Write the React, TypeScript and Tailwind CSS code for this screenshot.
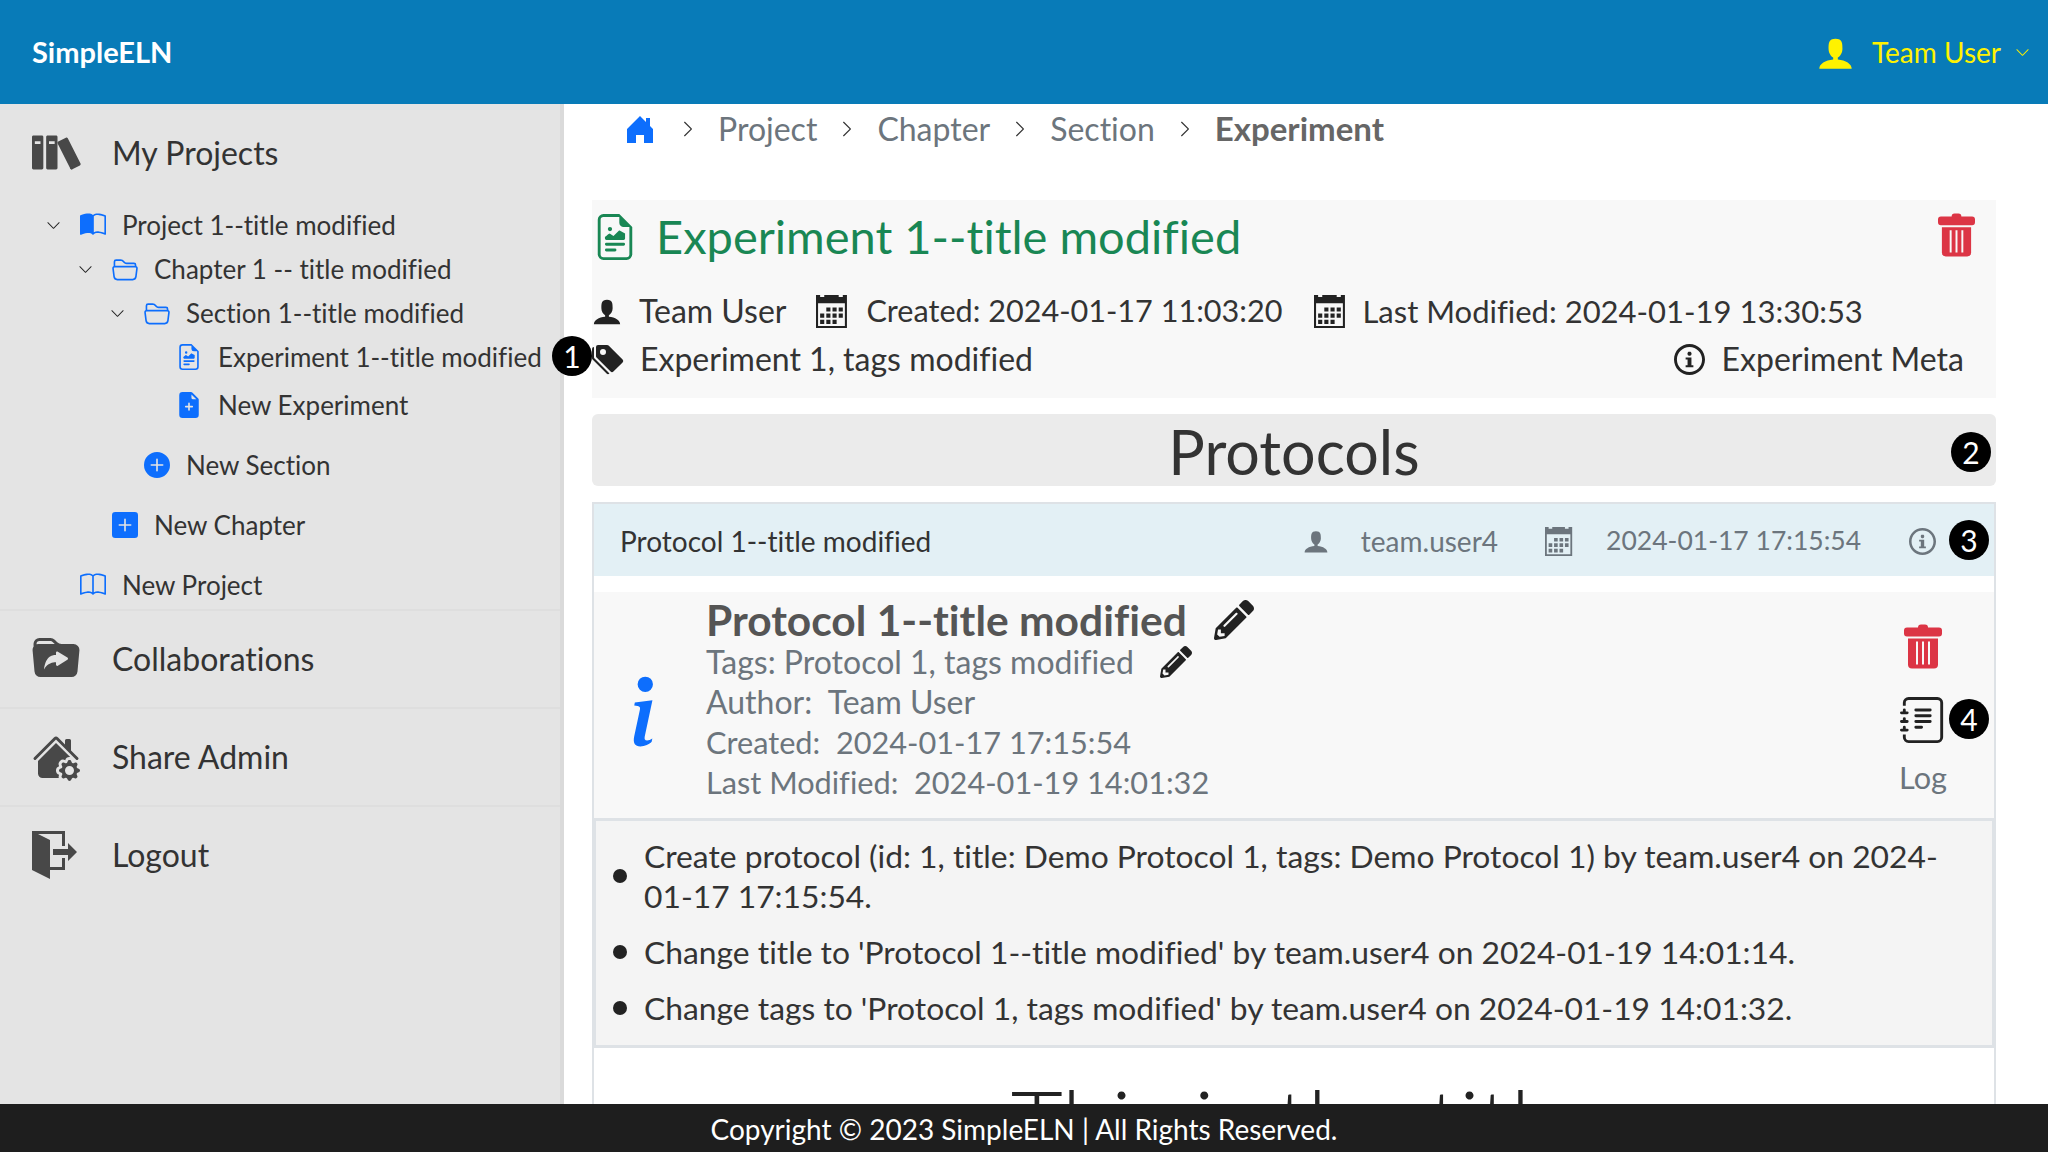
import type { ReactNode } from "react";
import {
	BsBook,
	BsBookHalf,
	BsChevronDown,
	BsChevronRight,
	BsFileEarmarkPlusFill,
	BsFileEarmarkRichtext,
	BsFolder2Open,
	BsFolderSymlinkFill,
	BsHouseGearFill,
	BsInfoLg,
	BsJournalText,
	BsPlusCircleFill,
	BsPlusSquareFill,
	BsTagsFill,
} from "react-icons/bs";
import { FaPencilAlt } from "react-icons/fa";
import { ImBooks, ImCalendar, ImExit, ImInfo, ImUser } from "react-icons/im";

function Trash({ className }: { className: string }) {
	return (
		<svg viewBox="0 0 38 44" className={className} fill="currentColor">
			<path d="M14 3a3 3 0 0 1 3-3h4a3 3 0 0 1 3 3h11a3 3 0 0 1 3 3v3a3 3 0 0 1-3 3H3a3 3 0 0 1-3-3V6a3 3 0 0 1 3-3z" />
			<path d="M4 14h30v26a4 4 0 0 1-4 4H8a4 4 0 0 1-4-4z" />
			<path d="M12 17h2v23h-2zM18 17h2v23h-2zM24 17h2v23h-2z" fill="#f8f8f8" />
		</svg>
	);
}

function HomeIcon({ className }: { className: string }) {
	return (
		<svg viewBox="0 0 26 27" className={className} fill="currentColor">
			<path d="M13 0l6 6V2h4v8l3 3v14h-9V19H9v8H0V13z" />
		</svg>
	);
}

function Badge({ n, className }: { n: number; className: string }) {
	return (
		<span
			className={`absolute z-10 flex size-[40px] items-center justify-center rounded-full bg-black text-[30px] leading-none text-white ${className}`}
		>
			{n}
		</span>
	);
}

const tree: { label: string; icon: ReactNode; chevron?: boolean; cls: string }[] = [
	{ label: "Project 1--title modified", icon: <BsBookHalf className="size-[26px] text-[#0d6efd]" />, chevron: true, cls: "pl-[46px]" },
	{ label: "Chapter 1 -- title modified", icon: <BsFolder2Open className="size-[26px] text-[#0d6efd]" />, chevron: true, cls: "pl-[78px]" },
	{ label: "Section 1--title modified", icon: <BsFolder2Open className="size-[26px] text-[#0d6efd]" />, chevron: true, cls: "pl-[110px]" },
	{ label: "Experiment 1--title modified", icon: <BsFileEarmarkRichtext className="size-[26px] text-[#0d6efd]" />, cls: "pl-[142px]" },
	{ label: "New Experiment", icon: <BsFileEarmarkPlusFill className="size-[26px] text-[#0d6efd]" />, cls: "pl-[142px] mt-[4px]" },
	{ label: "New Section", icon: <BsPlusCircleFill className="size-[26px] text-[#0d6efd]" />, cls: "pl-[110px] mt-[16px]" },
	{ label: "New Chapter", icon: <BsPlusSquareFill className="size-[26px] text-[#0d6efd]" />, cls: "pl-[78px] mt-[16px]" },
	{ label: "New Project", icon: <BsBook className="size-[26px] text-[#0d6efd]" />, cls: "pl-[46px] mt-[16px]" },
];

const logs = [
	"Create protocol (id: 1, title: Demo Protocol 1, tags: Demo Protocol 1) by team.user4 on 2024-01-17 17:15:54.",
	"Change title to 'Protocol 1--title modified' by team.user4 on 2024-01-19 14:01:14.",
	"Change tags to 'Protocol 1, tags modified' by team.user4 on 2024-01-19 14:01:32.",
];

function Sidebar() {
	return (
		<aside className="h-full w-[564px] shrink-0 border-r-[4px] border-[#dadada] bg-[#e4e4e4] text-[#333]">
			<div className="flex h-[99px] items-center gap-[29px] pb-[2px] pl-[32px] text-[32px]">
				<ImBooks className="size-[51px] text-[#484848]" />
				My Projects
			</div>
			<ul className="mb-[2px] text-[26px]">
				{tree.map((t) => (
					<li key={t.label} className={`flex h-[44px] items-center ${t.cls}`}>
						{t.chevron && <BsChevronDown className="mr-[19px] size-[15px] text-[#222]" />}
						{!t.chevron && <span className="w-[34px]" />}
						<span className="mr-[16px] flex w-[26px] justify-center">{t.icon}</span>
						{t.label}
					</li>
				))}
			</ul>
			{[
				{ label: "Collaborations", icon: <BsFolderSymlinkFill className="size-[48px] text-[#484848]" /> },
				{ label: "Share Admin", icon: <BsHouseGearFill className="size-[48px] text-[#484848]" /> },
				{ label: "Logout", icon: <ImExit className="size-[48px] text-[#484848]" /> },
			].map((s) => (
				<div key={s.label} className="flex h-[98px] items-center gap-[32px] border-t-2 border-[#dedede] pl-[32px] text-[32px]">
					{s.icon}
					{s.label}
				</div>
			))}
		</aside>
	);
}

function Breadcrumb() {
	const sep = <BsChevronRight className="size-[18px] text-[#333]" />;
	return (
		<nav className="mb-[46px] flex h-[50px] items-center gap-[21px] pl-[35px] text-[32px] text-[#6c757d]">
			<HomeIcon className="mr-[5px] h-[27px] w-[26px] text-[#0d6efd]" />
			{sep}
			<span>Project</span>
			{sep}
			<span>Chapter</span>
			{sep}
			<span>Section</span>
			{sep}
			<span className="text-[33px] font-bold text-[#666]">Experiment</span>
		</nav>
	);
}

function ExperimentCard() {
	return (
		<section className="relative h-[198px] bg-[#f8f8f8] text-[31px] text-[#333]">
			<div className="flex h-[74px] items-center gap-[18px] pb-[1px] text-[#198754]">
				<BsFileEarmarkRichtext className="size-[46px]" />
				<h1 className="text-[47px]">Experiment 1--title modified</h1>
			</div>
			<Trash className="absolute right-[21px] top-[13px] h-[44px] w-[37px] text-[#dc3545]" />
			<div className="mt-[13px] flex h-[48px] items-center">
				<ImUser className="mr-[17px] size-[30px] text-[#222]" />
				<span className="text-[32px]">Team User</span>
				<ImCalendar className="ml-[30px] mr-[17px] size-[33px] text-[#222]" />
				<span className="text-[30.6px]">Created: 2024-01-17 11:03:20</span>
				<ImCalendar className="ml-[32px] mr-[15px] size-[33px] text-[#222]" />
				<span>Last Modified: 2024-01-19 13:30:53</span>
			</div>
			<div className="flex h-[48px] items-center">
				<BsTagsFill className="mr-[16px] size-[32px] text-[#222]" />
				<span className="text-[32px]">Experiment 1, tags modified</span>
				<ImInfo className="ml-auto mr-[17px] size-[31px] text-[#222]" />
				<span className="mr-[32px] text-[32px]">Experiment Meta</span>
			</div>
		</section>
	);
}

function ProtocolCard() {
	return (
		<section className="relative mt-[16px] border-x-2 border-t-2 border-[#dee2e6]">
			<div className="flex h-[72px] items-center bg-[#e3f0f5] pl-[26px] pt-[2px] text-[28px] text-[#333]">
				<span>Protocol 1--title modified</span>
				<div className="ml-auto mr-[58px] flex items-center text-[#6c757d]">
					<ImUser className="mr-[32px] size-[26px]" />
					<span>team.user4</span>
					<ImCalendar className="ml-[47px] mr-[32px] size-[29px]" />
					<span className="text-[26.5px]">2024-01-17 17:15:54</span>
					<ImInfo className="ml-[48px] size-[27px]" />
				</div>
			</div>
			<div className="mt-[16px] flex h-[226px] bg-[#f8f8f8] text-[30.7px] leading-[40px] text-[#6c757d]">
				<BsInfoLg className="ml-[2px] mt-[73px] size-[93px] shrink-0 text-[#0d6efd]" />
				<div className="ml-[17px] mt-[6px]">
					<div className="flex items-center text-[42.5px] font-bold leading-[44px] text-[#555]">
						Protocol 1--title modified
						<FaPencilAlt className="ml-[27px] size-[40px] text-[#222]" />
					</div>
					<div className="flex items-center text-[32px]">
						Tags: Protocol 1, tags modified
						<FaPencilAlt className="ml-[26px] size-[32px] text-[#222]" />
					</div>
					<div className="text-[32px]">Author:&nbsp; Team User</div>
					<div className="pt-[1px]">Created:&nbsp; 2024-01-17 17:15:54</div>
					<div>Last Modified:&nbsp; 2024-01-19 14:01:32</div>
				</div>
				<div className="ml-auto mr-[44px] flex w-[54px] flex-col items-center pt-[32px]">
					<Trash className="h-[45px] w-[38px] shrink-0 text-[#dc3545]" />
					<BsJournalText className="mt-[28px] size-[46px] shrink-0 text-[#222]" />
					<span className="mt-[15px]">Log</span>
				</div>
			</div>
			<ul className="flex h-[230px] flex-col gap-[16px] border-x-2 border-y-[3px] border-[#dee2e6] bg-[#f4f4f4] pb-[13px] pl-[17px] pr-[40px] pt-[15px] text-[31.8px] leading-[40px] text-[#333]">
				{logs.map((l) => (
					<li key={l} className="flex items-center gap-[17px]">
						<span className="size-[14px] shrink-0 rounded-full bg-[#222]" />
						<span>{l}</span>
					</li>
				))}
			</ul>
			<h2 className="pt-[19px] text-center text-[90px] font-light leading-[108px] text-[#222]">This is the title</h2>
			<Badge n={3} className="right-[5px] top-[16px]" />
			<Badge n={4} className="right-[5px] top-[195px]" />
		</section>
	);
}

export default function App() {
	return (
		<div className="flex h-[1152px] w-[2048px] flex-col overflow-hidden bg-white font-['Lato',sans-serif] [font-variant-ligatures:none]">
			<header className="flex h-[104px] shrink-0 items-center bg-[#087bb8] pl-[32px] pr-[18px]">
				<span className="text-[29px] font-bold text-white">SimpleELN</span>
				<div className="ml-auto flex items-center text-[28px] text-[#fff200]">
					<ImUser className="mr-[18px] size-[37px]" />
					Team User
					<BsChevronDown className="ml-[14px] size-[15px]" />
				</div>
			</header>
			<div className="flex min-h-0 flex-1 overflow-hidden">
				<Sidebar />
				<main className="min-w-0 flex-1 pl-[28px] pr-[52px]">
					<Breadcrumb />
					<div className="relative">
						<ExperimentCard />
						<Badge n={1} className="-left-[40px] top-[136px]" />
						<div className="relative mt-[16px] flex h-[72px] items-center justify-center rounded-md bg-[#ebebeb] pt-[3px] text-[61px] text-[#333]">
							Protocols
							<Badge n={2} className="right-[5px] top-[18px]" />
						</div>
						<ProtocolCard />
					</div>
				</main>
			</div>
			<footer className="flex h-[48px] shrink-0 items-center justify-center bg-[#1e1e1e] pt-[1px] text-[28px] text-white">
				Copyright © 2023 SimpleELN | All Rights Reserved.
			</footer>
		</div>
	);
}
